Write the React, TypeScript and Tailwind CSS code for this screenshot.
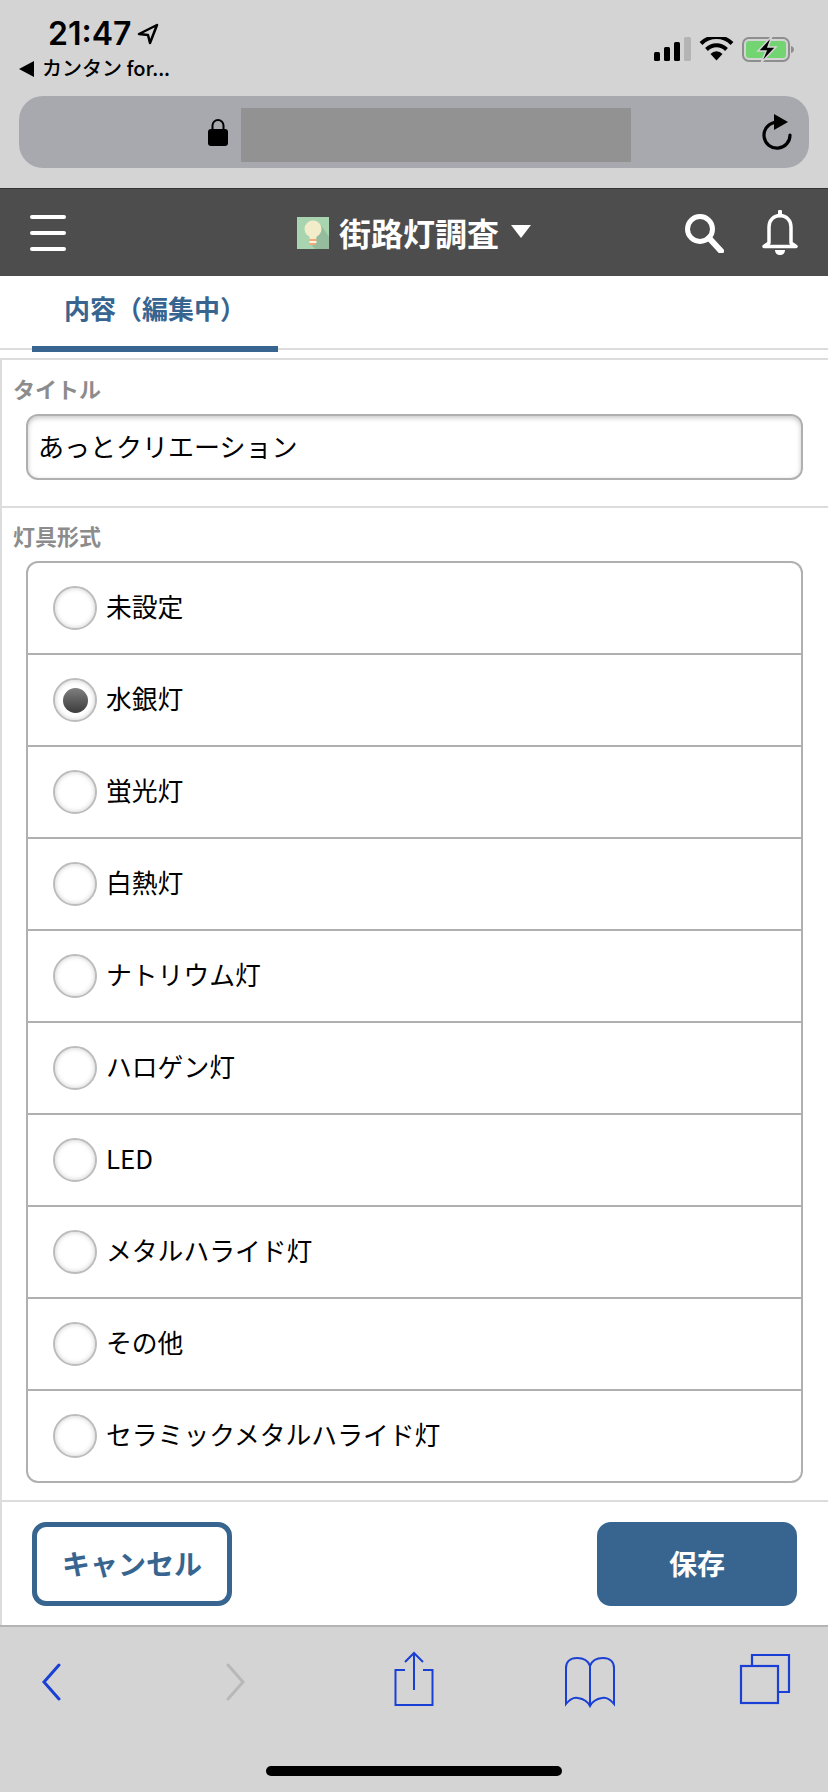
const font = { fontFamily: '"Noto Sans CJK JP", "Noto Sans", sans-serif' }

const lampTypes = [
  '未設定',
  '水銀灯',
  '蛍光灯',
  '白熱灯',
  'ナトリウム灯',
  'ハロゲン灯',
  'LED',
  'メタルハライド灯',
  'その他',
  'セラミックメタルハライド灯',
]

function StatusIcons() {
  return (
    <svg width="142" height="26" viewBox="0 0 142 26">
      <rect x="0" y="15" width="6" height="9" rx="1.5" fill="#000" />
      <rect x="10" y="10" width="6" height="14" rx="1.5" fill="#000" />
      <rect x="20" y="5" width="6" height="19" rx="1.5" fill="#000" />
      <rect x="30" y="0" width="7" height="24" rx="1.5" fill="#b4b4b4" />
      <path d="M47 6.500a22 22 0 0 1 31 0" fill="none" stroke="#000" strokeWidth="4" />
      <path d="M52.500 12.500a14 14 0 0 1 20 0" fill="none" stroke="#000" strokeWidth="4" />
      <path d="M56.500 17a8 8 0 0 1 12 0L62.500 23.500z" fill="#000" />
      <rect x="89" y="1" width="46" height="23" rx="6" fill="none" stroke="#8e8e8e" strokeWidth="2" />
      <rect x="92" y="4" width="40" height="17" rx="3" fill="#72d572" />
      <path d="M137 9c2 .5 3 2 3 3.500s-1 3-3 3.500z" fill="#8e8e8e" />
      <path d="M118 -1l-14 15h8l-5 12 15-16h-8z" fill="#000" stroke="#d4d4d4" strokeWidth="1.500" />
    </svg>
  )
}

function Radio({ checked }: { checked?: boolean }) {
  return (
    <span className="flex h-[44px] w-[44px] shrink-0 items-center justify-center rounded-full border-2 border-[#bcbcbc] bg-white shadow-[inset_0_0_5px_rgba(0,0,0,0.2)]">
      {checked && <span className="h-[25px] w-[25px] rounded-full bg-gradient-to-b from-[#808080] to-[#3c3c3c]" />}
    </span>
  )
}

function Toolbar() {
  return (
    <div className="h-[167px] border-t-2 border-[#b4b4b4] bg-[#d4d4d4]">
      <div className="flex h-[100px] items-start">
        <svg className="ml-[40px] mt-[36px]" width="22" height="38" viewBox="0 0 22 38">
          <path d="M19 2L4 19l15 17" fill="none" stroke="#1a3fd4" strokeWidth="3" strokeLinecap="round" />
        </svg>
        <svg className="ml-[163px] mt-[36px]" width="22" height="38" viewBox="0 0 22 38">
          <path d="M3 2l15 17L3 36" fill="none" stroke="#b8b8b8" strokeWidth="3" strokeLinecap="round" />
        </svg>
        <svg className="ml-[147px] mt-[24px]" width="40" height="56" viewBox="0 0 40 56">
          <path d="M11 19H1.500v35h37V19H29" fill="none" stroke="#1a3fd4" strokeWidth="2" />
          <path d="M20 39V2M11 11l9-9 9 9" fill="none" stroke="#1a3fd4" strokeWidth="2" />
        </svg>
        <svg className="ml-[130px] mt-[29px]" width="52" height="52" viewBox="0 0 52 52">
          <path
            d="M26 10C24 4 18 2 13 2 6 2 2 6 2 12v36c4-5 8-7 12-6 6 1 10 4 12 8 2-4 6-7 12-8 4-1 8 1 12 6V12c0-6-4-10-11-10-5 0-11 2-13 8zM26 10v40"
            fill="none"
            stroke="#1a3fd4"
            strokeWidth="2"
          />
        </svg>
        <svg className="ml-[123px] mt-[26px]" width="52" height="52" viewBox="0 0 52 52">
          <rect x="2" y="13" width="37" height="37" fill="none" stroke="#1a3fd4" strokeWidth="2.200" />
          <path d="M13 13V2h37v37H39" fill="none" stroke="#1a3fd4" strokeWidth="2.200" />
        </svg>
      </div>
      <div className="mx-auto mt-[39px] h-[10px] w-[296px] rounded-full bg-black" />
    </div>
  )
}

export default function App() {
  return (
    <div className="flex h-[1792px] w-[828px] flex-col overflow-hidden bg-white text-black" style={font}>
      {/* browser chrome */}
      <div className="h-[188px] bg-[#d4d4d4] px-[19px]">
        <div className="flex h-[96px] justify-between">
          <div>
            <div className="ml-[29px] flex h-[58px] items-center gap-[6px] pt-[10px]">
              <span className="text-[32px] leading-none font-semibold" style={{ fontFamily: 'Inter, sans-serif' }}>
                21:47
              </span>
              <svg width="22" height="22" viewBox="0 0 22 22">
                <path d="M20 2L2 11l9 1 2 8z" fill="none" stroke="#000" strokeWidth="2.500" strokeLinejoin="round" />
              </svg>
            </div>
            <div className="flex h-[22px] items-center gap-[8px]">
              <svg width="15" height="16" viewBox="0 0 15 16">
                <path d="M15 0v16L0 8z" fill="#000" />
              </svg>
              <span className="-mt-[2px] text-[20px] leading-none font-medium">カンタン for...</span>
            </div>
          </div>
          <div className="mr-[13px] mt-[37px]">
            <StatusIcons />
          </div>
        </div>
        <div className="flex h-[72px] items-center rounded-[24px] bg-[#a8a9ae]">
          <svg className="ml-[189px]" width="20" height="28" viewBox="0 0 20 28">
            <path d="M4.500 12V7.500a5.500 5.500 0 0 1 11 0V12" fill="none" stroke="#000" strokeWidth="2" />
            <rect x="0" y="11" width="20" height="17" rx="3" fill="#000" />
          </svg>
          <div className="ml-[13px] mt-[6px] h-[54px] w-[390px] bg-[#929292]" />
          <svg className="ml-[129px]" width="32" height="38" viewBox="0 0 32 38">
            <path d="M14 9.500a13 13 0 1 0 16 12.500" fill="none" stroke="#000" strokeWidth="3.200" strokeLinecap="round" />
            <path d="M14 1l14 8-14 8z" fill="#000" />
          </svg>
        </div>
      </div>

      {/* app header */}
      <div className="flex h-[88px] items-center border-t border-[#333] bg-[#4d4d4d] pl-[30px]">
        <div className="flex w-[36px] flex-col gap-[12px]">
          <span className="h-[4px] rounded-full bg-white" />
          <span className="h-[4px] rounded-full bg-white" />
          <span className="h-[4px] rounded-full bg-white" />
        </div>
        <svg className="ml-[231px]" width="32" height="32" viewBox="0 0 32 32">
          <rect width="32" height="32" fill="#a8d5b0" />
          <path d="M24 8L32 20V32H18L13 26z" fill="#95bd9d" />
          <circle cx="16" cy="12" r="8.500" fill="#f3eccb" />
          <path d="M12 17h8l-1 6h-6z" fill="#f3eccb" />
          <rect x="12.500" y="22" width="7" height="2" fill="#f0a878" />
          <rect x="12.500" y="24" width="7" height="2" fill="#fbf5e0" />
          <rect x="13" y="26" width="6" height="2" fill="#f0a878" />
        </svg>
        <span className="ml-[10px] -mt-[2px] text-[32px] leading-none font-bold text-white">街路灯調査</span>
        <svg className="ml-[12px] -mt-[2px]" width="20" height="13" viewBox="0 0 20 13">
          <path d="M0 0h20L10 13z" fill="#fff" />
        </svg>
        <svg className="ml-[153px]" width="40" height="40" viewBox="0 0 40 40">
          <circle cx="16" cy="16" r="12.500" fill="none" stroke="#fff" strokeWidth="5" />
          <path d="M25 25l12 13" fill="none" stroke="#fff" strokeWidth="6" strokeLinecap="round" />
        </svg>
        <svg className="ml-[38px]" width="36" height="46" viewBox="0 0 36 46">
          <path d="M18 1.500v4" fill="none" stroke="#fff" strokeWidth="4" strokeLinecap="round" />
          <path d="M7 33V17C7 10 12 5.500 18 5.500S29 10 29 17v16l5 3.500H2z" fill="none" stroke="#fff" strokeWidth="3.500" strokeLinejoin="round" />
          <path d="M13 40h10c0 3-2 5-5 5s-5-2-5-5z" fill="#fff" />
        </svg>
      </div>

      {/* tabs */}
      <div className="flex h-[74px] border-b-2 border-[#dcdcdc] pl-[32px]">
        <div className="-mb-[2px] flex h-[76px] w-[246px] items-start justify-center border-b-[6px] border-[#37658f] pt-[13px]">
          <span className="whitespace-nowrap text-[26px] leading-[38px] font-bold text-[#37658f]">内容（編集中）</span>
        </div>
      </div>
      <div className="h-[10px] border-b-2 border-[#dcdcdc]" />

      {/* title */}
      <section className="h-[148px] border-b-2 border-l-2 border-[#dcdcdc] pl-[11px] pr-[25px]">
        <div className="h-[54px] pt-[13px] text-[22px] leading-[30px] font-bold text-[#8c8c8c]">タイトル</div>
        <div className="ml-[13px] flex h-[66px] items-center rounded-[12px] border-2 border-[#b0b0b0] bg-white pb-[4px] pl-[10px] text-[26px] shadow-[inset_0_2px_5px_rgba(0,0,0,0.22)]">
          あっとクリエーション
        </div>
      </section>

      {/* lamp type */}
      <section className="flex-1 border-l-2 border-[#dcdcdc] pl-[11px] pr-[25px]">
        <div className="h-[53px] pt-[12px] text-[22px] leading-[30px] font-bold text-[#8c8c8c]">灯具形式</div>
        <div className="ml-[13px] overflow-hidden rounded-[12px] border-2 border-[#b0b0b0]">
          {lampTypes.map((label, i) => (
            <div
              key={label}
              className={`flex items-center gap-[9px] pl-[25px] text-[25.8px] ${i > 0 ? 'h-[92px] border-t-2 border-[#b0b0b0]' : 'h-[90px]'}`}
            >
              <Radio checked={i === 1} />
              <span className="-mt-[3px]">{label}</span>
            </div>
          ))}
        </div>
      </section>

      {/* actions */}
      <div className="flex h-[125px] items-start justify-between border-t-2 border-l-2 border-[#dcdcdc] pl-[30px] pr-[31px] pt-[20px]">
        <button className="flex h-[84px] w-[200px] items-center justify-center rounded-[14px] border-[5px] border-[#37658f] bg-white pb-[3px] text-[28px] font-bold text-[#37658f]">
          キャンセル
        </button>
        <button className="flex h-[84px] w-[200px] items-center justify-center rounded-[14px] bg-[#37658f] pb-[3px] text-[28px] font-bold text-white">
          保存
        </button>
      </div>

      <Toolbar />
    </div>
  )
}
